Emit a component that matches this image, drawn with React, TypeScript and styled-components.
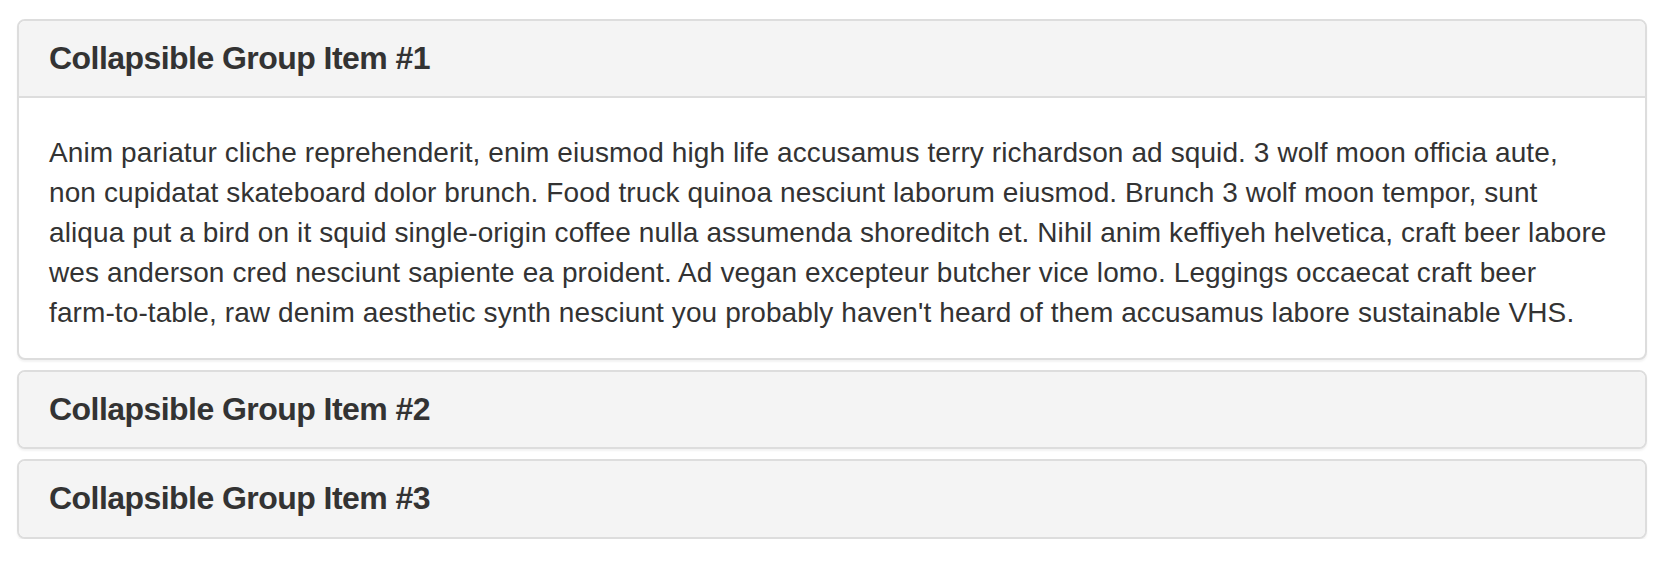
import React from 'react'
import styled, { createGlobalStyle } from 'styled-components'

const GlobalStyle = createGlobalStyle`
  body {
    margin: 0;
    background: #fff;
    font-family: "Liberation Sans", Arial, sans-serif;
    color: #333;
  }
`

const Group = styled.div`
  display: flex;
  flex-direction: column;
  gap: 10px;
  padding: 19px 19px 0 17px;
`

const Panel = styled.div`
  background: #fff;
  border: 2px solid #ddd;
  border-radius: 8px;
  box-shadow: 0 2px 2px rgba(0, 0, 0, 0.05);
  overflow: hidden;
`

const Heading = styled.div<{ $open?: boolean }>`
  background: #f4f4f4;
  padding: 20px 30px;
  border-bottom: ${(p) => (p.$open ? '2px solid #ddd' : 'none')};
`

const Title = styled.h4`
  margin: 0;
  font-size: 32px;
  font-weight: 700;
  line-height: 1.1;
  letter-spacing: -0.55px;
  color: #333;
`

const Body = styled.div`
  padding: 35px 30px 25px;
  font-size: 28px;
  line-height: 40px;
  letter-spacing: 0.1px;
`

const Line = styled.span`
  display: block;
  white-space: nowrap;
`

const lines = [
  'Anim pariatur cliche reprehenderit, enim eiusmod high life accusamus terry richardson ad squid. 3 wolf moon officia aute,',
  'non cupidatat skateboard dolor brunch. Food truck quinoa nesciunt laborum eiusmod. Brunch 3 wolf moon tempor, sunt',
  'aliqua put a bird on it squid single-origin coffee nulla assumenda shoreditch et. Nihil anim keffiyeh helvetica, craft beer labore',
  'wes anderson cred nesciunt sapiente ea proident. Ad vegan excepteur butcher vice lomo. Leggings occaecat craft beer',
  "farm-to-table, raw denim aesthetic synth nesciunt you probably haven't heard of them accusamus labore sustainable VHS.",
]

const items = [
  { title: 'Collapsible Group Item #1', open: true },
  { title: 'Collapsible Group Item #2', open: false },
  { title: 'Collapsible Group Item #3', open: false },
]

const App = () => {
  return (
    <>
      <GlobalStyle />
      <Group>
        {items.map((item) => (
          <Panel key={item.title}>
            <Heading $open={item.open}>
              <Title>{item.title}</Title>
            </Heading>
            {item.open && (
              <Body>
                {lines.map((l) => (
                  <Line key={l}>{l}</Line>
                ))}
              </Body>
            )}
          </Panel>
        ))}
      </Group>
    </>
  )
}

export default App
